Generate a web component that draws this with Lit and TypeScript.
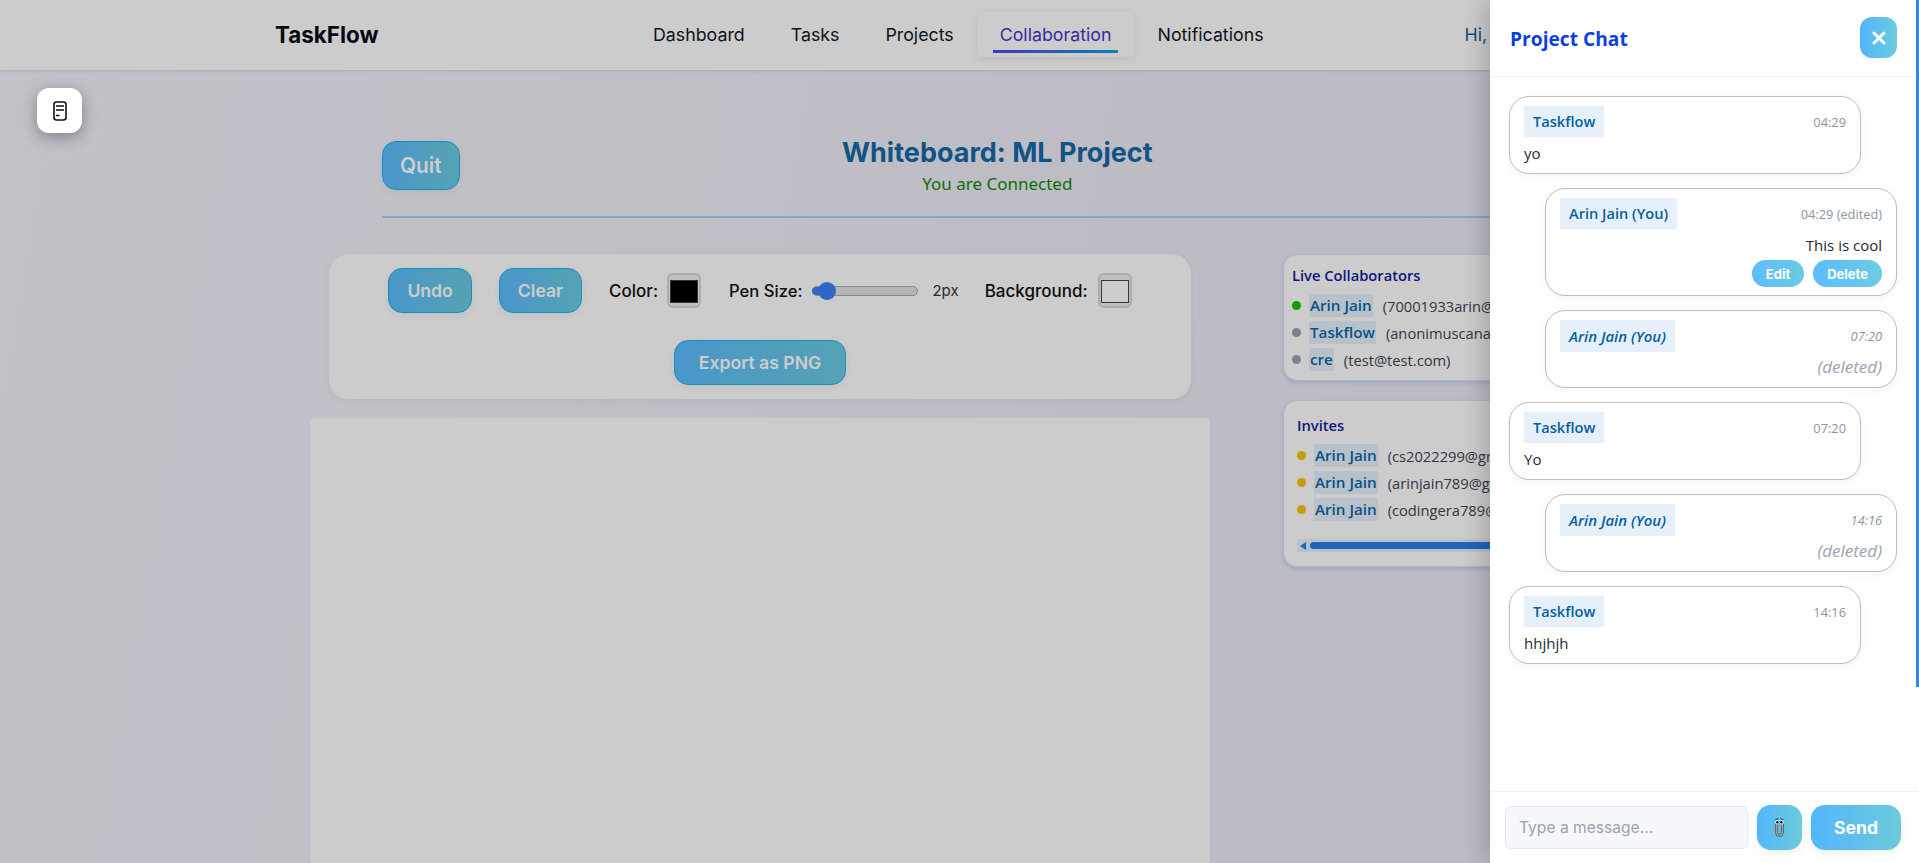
import { LitElement, html, css } from 'lit';
import { customElement } from 'lit/decorators.js';

const links = ['Dashboard', 'Tasks', 'Projects', 'Collaboration', 'Notifications'];

const collaborators = [
  { name: 'Arin Jain', email: '(70001933arin@gmail.com)', online: true },
  { name: 'Taskflow', email: '(anonimuscanary@gmail.com)', online: false },
  { name: 'cre', email: '(test@test.com)', online: false },
];

const invites = [
  { name: 'Arin Jain', email: '(cs2022299@gmail.com)' },
  { name: 'Arin Jain', email: '(arinjain789@gmail.com)' },
  { name: 'Arin Jain', email: '(codingera789@gmail.com)' },
];

const messages = [
  { name: 'Taskflow', time: '04:29', text: 'yo' },
  { name: 'Arin Jain (You)', time: '04:29 (edited)', text: 'This is cool', own: true, actions: true },
  { name: 'Arin Jain (You)', time: '07:20', own: true, deleted: true },
  { name: 'Taskflow', time: '07:20', text: 'Yo' },
  { name: 'Arin Jain (You)', time: '14:16', own: true, deleted: true },
  { name: 'Taskflow', time: '14:16', text: 'hhjhjh' },
];

@customElement('app-root')
export class AppRoot extends LitElement {
  static styles = css`
    :host {
      display: block;
      position: relative;
      height: 863px;
      overflow: hidden;
      font-family: Inter, sans-serif;
      background: linear-gradient(100deg, #f5f3fb 0%, #eeedf7 50%, #e8e8f6 100%);
      color: #111827;
    }

    .navbar {
      display: flex;
      align-items: center;
      height: 70px;
      box-sizing: border-box;
      padding: 0 0 1px 275px;
      background: #ffffff;
      box-shadow: 0 1px 3px rgba(0, 0, 0, 0.12);
    }

    .logo {
      width: 103px;
      font-size: 22.4px;
      font-weight: 700;
      color: #0b0b1a;
    }

    .links {
      display: flex;
      margin-left: 252px;
    }

    .link {
      position: relative;
      padding: 10px 23px;
      font-size: 17.8px;
      line-height: 25px;
      color: #111827;
    }

    .link.active {
      color: #4338ca;
      background: #ffffff;
      border-radius: 4px;
      box-shadow: 0 2px 8px rgba(0, 0, 0, 0.08);
    }

    .link.active::after {
      content: '';
      position: absolute;
      left: 16px;
      right: 16px;
      bottom: 4px;
      height: 3px;
      background: linear-gradient(90deg, #4f46e5, #0ea5e9);
    }

    .greeting {
      margin-left: 178px;
      font-size: 17.8px;
      color: #1a5f96;
      white-space: nowrap;
    }

    .notes-btn {
      position: absolute;
      z-index: 3;
      left: 37px;
      top: 88px;
      display: flex;
      align-items: center;
      justify-content: center;
      width: 45px;
      height: 45px;
      background: #ffffff;
      border-radius: 12px;
      box-shadow: 0 4px 16px rgba(0, 0, 0, 0.35);
    }

    .main {
      padding: 71px 0 0 310px;
    }

    .board-header {
      display: flex;
      align-items: flex-start;
      box-sizing: border-box;
      width: 1230px;
      height: 77px;
      margin-left: 72px;
      border-bottom: 2px solid #abcdfb;
    }

    .btn {
      box-sizing: border-box;
      height: 45px;
      padding: 0 18px;
      font-family: Inter, sans-serif;
      font-size: 17.6px;
      font-weight: 600;
      color: #ffffff;
      background: linear-gradient(90deg, #5cbcff, #6bcce0);
      border: 1px solid #1ab4f0;
      border-radius: 14px;
      box-shadow: 0 2px 8px rgba(0, 0, 0, 0.06);
    }

    .btn.quit {
      height: 49px;
      padding: 0 17px;
      font-size: 20.8px;
    }

    .btn.clear {
      margin-left: 27px;
    }

    .btn.export {
      padding: 0 24px;
    }

    .title-block {
      flex: 1;
      padding-right: 77px;
      text-align: center;
    }

    .title {
      margin: -5px 0 0;
      font-size: 27px;
      line-height: 34px;
      font-weight: 700;
      color: #136aa6;
    }

    .status {
      margin-top: 3px;
      font-size: 17px;
      line-height: 22px;
      color: #0a8a0a;
      font-family: 'Noto Sans', sans-serif;
    }

    .workspace {
      display: flex;
      align-items: flex-start;
      gap: 73px;
      margin-top: 36px;
    }

    .left-col {
      display: flex;
      flex-direction: column;
      width: 900px;
      flex: none;
      gap: 19px;
    }

    .toolbar {
      display: flex;
      flex-direction: column;
      align-items: center;
      gap: 27px;
      box-sizing: border-box;
      width: 862px;
      height: 145px;
      margin-left: 19px;
      padding-top: 14px;
      background: #ffffff;
      border-radius: 20px;
      box-shadow: 0 2px 8px rgba(0, 0, 0, 0.05);
    }

    .tools {
      display: flex;
      align-items: center;
      height: 45px;
      font-size: 17px;
      font-weight: 500;
      color: #111;
    }

    .label {
      white-space: nowrap;
    }

    .label.color {
      margin: 0 9px 0 27px;
    }

    .label.pen {
      margin-left: 28px;
      font-size: 16.6px;
    }

    .label.bg {
      margin-right: 10px;
    }

    .swatch {
      display: flex;
      box-sizing: border-box;
      width: 34px;
      height: 35px;
      padding: 5px 1px 3px;
      background: #f0f0f0;
      border: 2px solid #d8d8dc;
      border-radius: 6px;
    }

    .swatch span {
      flex: 1;
      border: 1px solid #444;
    }

    .swatch .black {
      background: #000000;
    }

    .swatch .white {
      background: #ffffff;
    }

    .slider {
      position: relative;
      width: 106px;
      height: 10px;
      margin-left: 10px;
      box-sizing: border-box;
      background: #e4e4e4;
      border: 1px solid #aaa;
      border-radius: 5px;
    }

    .slider::before {
      content: '';
      position: absolute;
      left: -1px;
      top: 0;
      width: 14px;
      height: 8px;
      background: #3b82f6;
      border-radius: 4px 0 0 4px;
    }

    .slider::after {
      content: '';
      position: absolute;
      left: 5px;
      top: -5px;
      width: 18px;
      height: 18px;
      background: #3b82f6;
      border-radius: 50%;
    }

    .pen-value {
      margin: 0 26px 0 14px;
      font-size: 15px;
      font-weight: 400;
      color: #333;
    }

    .canvas {
      height: 600px;
      background: #ffffff;
      border-radius: 4px;
    }

    .side-col {
      display: flex;
      flex-direction: column;
      flex: none;
      gap: 19px;
      width: 380px;
      font-family: 'Open Sans', sans-serif;
    }

    .card {
      box-sizing: border-box;
      background: #ffffff;
      border: 1px solid #d4e6fb;
      border-radius: 14px;
      box-shadow: 0 2px 4px rgba(60, 100, 160, 0.2);
      overflow: hidden;
    }

    .card.live {
      height: 127px;
      padding: 9px 8px;
    }

    .card.invite {
      height: 167px;
      padding: 13px 13px;
    }

    .card-title {
      font-size: 14.7px;
      line-height: 22px;
      font-weight: 600;
      color: #10209a;
    }

    .people {
      display: flex;
      flex-direction: column;
      gap: 4px;
      margin-top: 8px;
    }

    .person {
      display: flex;
      align-items: center;
      height: 23px;
      font-size: 14.7px;
      white-space: nowrap;
      color: #3d4654;
    }

    .dot {
      flex: none;
      width: 9px;
      height: 9px;
      margin: 0 8px 0 0;
      background: #9ca3af;
      border-radius: 50%;
    }

    .dot.online {
      background: #16c60c;
    }

    .dot.pending {
      background: #f5c400;
    }

    .person-name {
      margin-right: 10px;
      padding: 0 1px;
      font-size: 15.2px;
      font-weight: 600;
      line-height: 23px;
      color: #0b66a8;
      background: #e6f2fd;
    }

    .hscroll {
      display: flex;
      align-items: center;
      height: 13px;
      margin-top: 18px;
      padding: 0 0 0 3px;
      background: #e8f2ff;
    }

    .hscroll i {
      width: 0;
      height: 0;
      border-style: solid;
      border-width: 4px 6px 4px 0;
      border-color: transparent #2a7de9 transparent transparent;
    }

    .hscroll b {
      flex: 1;
      height: 7px;
      margin-left: 4px;
      background: #2a7de9;
      border-radius: 4px;
    }

    .overlay {
      position: absolute;
      z-index: 1;
      inset: 0;
      background: rgba(0, 0, 0, 0.2);
    }

    .chat {
      position: absolute;
      z-index: 2;
      top: 0;
      right: 0;
      bottom: 0;
      display: flex;
      flex-direction: column;
      width: 429px;
      background: #ffffff;
      box-shadow: -4px 0 24px rgba(0, 0, 0, 0.22);
      font-family: 'Open Sans', sans-serif;
    }

    .chat-bar {
      position: absolute;
      top: 0;
      right: 0;
      width: 3px;
      height: 687px;
      background: #2b87f4;
    }

    .chat-head {
      display: flex;
      align-items: center;
      justify-content: space-between;
      flex: none;
      box-sizing: border-box;
      height: 77px;
      padding: 0 22px 1px 20px;
      border-bottom: 1px solid #eef1f7;
    }

    .chat-title {
      margin-top: 2px;
      font-size: 19.2px;
      font-weight: 700;
      color: #0b3fe0;
    }

    .close {
      display: flex;
      align-items: center;
      justify-content: center;
      width: 37px;
      height: 41px;
      background: linear-gradient(90deg, #52b6fb, #6ccbdc);
      border-radius: 12px;
    }

    .chat-list {
      display: flex;
      flex: 1;
      flex-direction: column;
      gap: 14px;
      padding: 19px 22px 0 19px;
      min-height: 0;
    }

    .msg {
      box-sizing: border-box;
      width: 352px;
      padding: 9px 14px 8px;
      background: #ffffff;
      border: 1px solid #bdbdc2;
      border-radius: 20px;
      box-shadow: 0 2px 8px rgba(0, 0, 0, 0.05);
    }

    .msg.own {
      align-self: flex-end;
    }

    .msg-head {
      display: flex;
      align-items: center;
      justify-content: space-between;
    }

    .msg-name {
      padding: 0 9px;
      font-size: 14.6px;
      font-weight: 600;
      line-height: 31px;
      color: #05609f;
      background: #e6f0fa;
    }

    .msg-time {
      font-size: 12.8px;
      color: #8a94a6;
    }

    .msg-text {
      margin-top: 4px;
      font-size: 15px;
      line-height: 24px;
      color: #1f2937;
    }

    .msg.own .msg-text {
      text-align: right;
    }

    .msg.deleted .msg-name,
    .msg.deleted .msg-time {
      font-style: italic;
    }

    .msg.deleted .msg-name {
      font-size: 15px;
      line-height: 32px;
    }

    .msg.deleted .msg-text {
      margin-top: 3px;
      font-size: 17px;
      font-style: italic;
      color: #9aa3b2;
    }

    .msg-actions {
      display: flex;
      justify-content: flex-end;
      gap: 9px;
      margin-top: 3px;
    }

    .pill {
      display: flex;
      align-items: center;
      height: 27px;
      padding: 0 14px;
      font-family: Inter, sans-serif;
      font-size: 13px;
      font-weight: 700;
      color: #ffffff;
      background: linear-gradient(90deg, #5cbcff, #6bcce0);
      border-radius: 14px;
    }

    .chat-foot {
      display: flex;
      align-items: center;
      flex: none;
      box-sizing: border-box;
      height: 72px;
      padding: 0 18px 0 15px;
      border-top: 1px solid #eef1f7;
      font-family: Inter, sans-serif;
    }

    .chat-input {
      display: flex;
      align-items: center;
      box-sizing: border-box;
      width: 243px;
      height: 43px;
      padding-left: 13px;
      font-size: 15.6px;
      color: #9aa3b2;
      background: #f5f7fb;
      border: 1px solid #e2e8f0;
      border-radius: 6px;
    }

    .clip-btn {
      display: flex;
      align-items: center;
      justify-content: center;
      width: 45px;
      height: 45px;
      margin-left: 9px;
      background: linear-gradient(90deg, #52b6fb, #6ccbdc);
      border-radius: 14px;
      box-shadow: 0 2px 8px rgba(0, 0, 0, 0.08);
    }

    .send-btn {
      display: flex;
      align-items: center;
      justify-content: center;
      width: 90px;
      height: 45px;
      margin-left: 9px;
      font-size: 17.6px;
      font-weight: 700;
      color: #ffffff;
      background: linear-gradient(90deg, #52b6fb, #6ccbdc);
      border-radius: 14px;
      box-shadow: 0 2px 8px rgba(0, 0, 0, 0.08);
    }
  `;

  renderMessage(m: any) {
    const cls = `msg ${m.own ? 'own' : ''} ${m.deleted ? 'deleted' : ''}`;
    return html`
      <div class=${cls}>
        <div class="msg-head">
          <span class="msg-name">${m.name}</span>
          <span class="msg-time">${m.time}</span>
        </div>
        <div class="msg-text">${m.deleted ? '(deleted)' : m.text}</div>
        ${m.actions ? html`
          <div class="msg-actions">
            <span class="pill">Edit</span>
            <span class="pill">Delete</span>
          </div>
        ` : ''}
      </div>
    `;
  }

  render() {
    return html`
      <nav class="navbar">
        <div class="logo">TaskFlow</div>
        <div class="links">
          ${links.map(l => html`<span class="link ${l === 'Collaboration' ? 'active' : ''}">${l}</span>`)}
        </div>
        <div class="greeting">Hi, Arin Jain</div>
      </nav>

      <div class="notes-btn">
        <svg width="14" height="20" viewBox="0 0 14 20" fill="none" stroke="#111" stroke-width="1.6">
          <rect x="1" y="1" width="12" height="18" rx="2.5"></rect>
          <path d="M3 5h8M3 9h8M3 14.5h3.5" stroke-width="1.7"></path>
        </svg>
      </div>

      <div class="main">
        <div class="board-header">
          <button class="btn quit">Quit</button>
          <div class="title-block">
            <h1 class="title">Whiteboard: ML Project</h1>
            <div class="status">You are Connected</div>
          </div>
        </div>

        <div class="workspace">
          <div class="left-col">
            <div class="toolbar">
              <div class="tools">
                <button class="btn">Undo</button>
                <button class="btn clear">Clear</button>
                <span class="label color">Color:</span>
                <span class="swatch"><span class="black"></span></span>
                <span class="label pen">Pen Size:</span>
                <span class="slider"></span>
                <span class="pen-value">2px</span>
                <span class="label bg">Background:</span>
                <span class="swatch"><span class="white"></span></span>
              </div>
              <button class="btn export">Export as PNG</button>
            </div>
            <div class="canvas"></div>
          </div>

          <div class="side-col">
            <div class="card live">
              <div class="card-title">Live Collaborators</div>
              <div class="people">
                ${collaborators.map(c => html`
                  <div class="person">
                    <span class="dot ${c.online ? 'online' : ''}"></span>
                    <span class="person-name">${c.name}</span>
                    <span>${c.email}</span>
                  </div>
                `)}
              </div>
            </div>
            <div class="card invite">
              <div class="card-title">Invites</div>
              <div class="people">
                ${invites.map(c => html`
                  <div class="person">
                    <span class="dot pending"></span>
                    <span class="person-name">${c.name}</span>
                    <span>${c.email}</span>
                  </div>
                `)}
              </div>
              <div class="hscroll"><i></i><b></b></div>
            </div>
          </div>
        </div>
      </div>

      <div class="overlay"></div>

      <aside class="chat">
        <div class="chat-bar"></div>
        <div class="chat-head">
          <span class="chat-title">Project Chat</span>
          <span class="close">
            <svg width="14" height="14" viewBox="0 0 14 14" stroke="#fff" stroke-width="3" stroke-linecap="round">
              <path d="M2 2l10 10M12 2L2 12"></path>
            </svg>
          </span>
        </div>
        <div class="chat-list">
          ${messages.map(m => this.renderMessage(m))}
        </div>
        <div class="chat-foot">
          <div class="chat-input">Type a message...</div>
          <div class="clip-btn">
            <svg width="11" height="19" viewBox="0 0 11 19" fill="none">
              <path d="M3.6 7v7.5a1.9 1.9 0 0 0 3.8 0V7" stroke="#8a4f28" stroke-width="0.9"></path>
              <path d="M1.5 6v8.5a4 4 0 0 0 8 0V6" stroke="#8a4f28" stroke-width="0.9"></path>
              <circle cx="3.2" cy="4" r="1.9" fill="#fff"></circle>
              <circle cx="7.6" cy="4" r="1.9" fill="#fff"></circle>
              <circle cx="3.4" cy="4.2" r="1.2" fill="#000"></circle>
              <circle cx="7.4" cy="4.2" r="1.2" fill="#000"></circle>
              <path d="M1.4 1.4l3-.7M6.4.7l3 .7" stroke="#222" stroke-width="0.9"></path>
            </svg>
          </div>
          <div class="send-btn">Send</div>
        </div>
      </aside>
    `;
  }
}
